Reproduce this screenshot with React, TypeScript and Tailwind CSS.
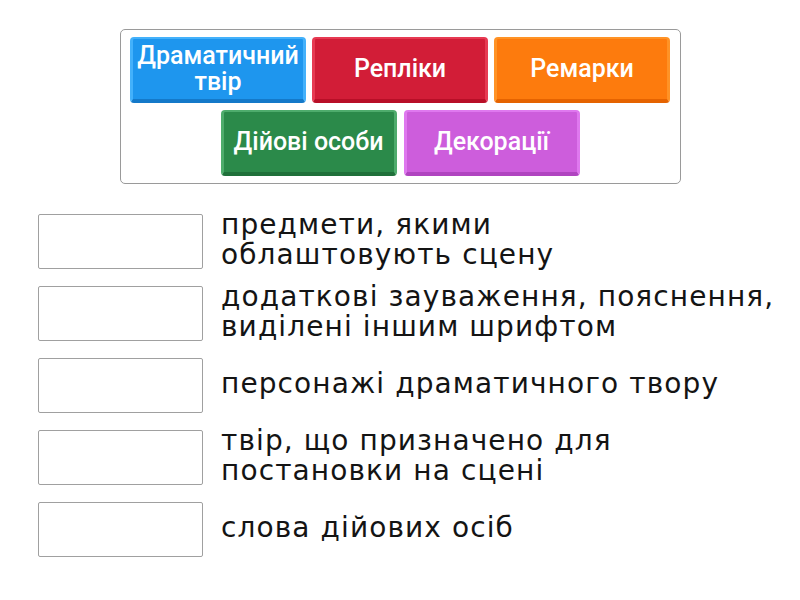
const tiles = [
  { label: "Драматичний твір", face: "bg-[#1e96ee]", edge: "border-[#43b1fb] border-b-[#1479c9]" },
  { label: "Репліки", face: "bg-[#d21d37]", edge: "border-[#e73a52] border-b-[#b80f27]" },
  { label: "Ремарки", face: "bg-[#fd7b0d]", edge: "border-[#ff9326] border-b-[#e56300]" },
];

const tiles2 = [
  { label: "Дійові особи", face: "bg-[#2b8a4a]", edge: "border-[#4eac6c] border-b-[#1f703a]" },
  { label: "Декорації", face: "bg-[#cd5ddc]", edge: "border-[#df78ef] border-b-[#b044c0]" },
];

// line breaks follow the reference
const rows = [
  ["предмети, якими", "облаштовують сцену"],
  ["додаткові зауваження, пояснення,", "виділені іншим шрифтом"],
  ["персонажі драматичного твору"],
  ["твір, що призначено для", "постановки на сцені"],
  ["слова дійових осіб"],
];

function Tile({ label, face, edge }: { label: string; face: string; edge: string }) {
  return (
    <div
      className={`w-[176px] h-[66px] rounded-[4px] border-[3px] border-t-[2px] border-b-[4px] ${edge} ${face} flex items-center justify-center text-center text-white font-medium text-[25px] leading-[26px]`}
      style={{ fontFamily: "Roboto, 'Liberation Sans', sans-serif" }}
    >
      {label}
    </div>
  );
}

export default function App() {
  return (
    <main className="w-[800px] h-[600px] bg-white pt-[29px]">
      <div className="mx-auto w-[561px] h-[155px] border border-[#9a9a9a] rounded-[5px] pt-[7px] flex flex-col items-center gap-[7px]">
        <div className="flex gap-[6px]">
          {tiles.map((t) => (
            <Tile key={t.label} {...t} />
          ))}
        </div>
        <div className="flex gap-[7px]">
          {tiles2.map((t) => (
            <Tile key={t.label} {...t} />
          ))}
        </div>
      </div>
      <div className="mt-[30px] pl-[38px] flex flex-col gap-[17px]">
        {rows.map((lines) => (
          <div key={lines[0]} className="h-[55px] flex items-center gap-[18px]">
            <div className="w-[165px] h-[55px] shrink-0 border border-[#a0a0a0] rounded-[2px] bg-white" />
            <div
              className="w-[560px] pb-[3px] text-[28px] leading-[30px] tracking-[1.1px] text-[#141414] whitespace-nowrap"
              style={{ fontFamily: "'DejaVu Sans', 'Noto Sans', sans-serif" }}
            >
              {lines.map((l) => (
                <div key={l}>{l}</div>
              ))}
            </div>
          </div>
        ))}
      </div>
    </main>
  );
}
